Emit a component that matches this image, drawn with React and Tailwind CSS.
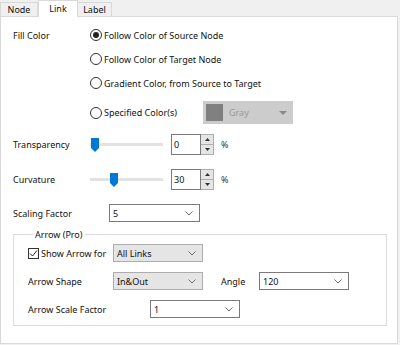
import React from "react";

const font = { fontFamily: '"Noto Sans", "Open Sans", sans-serif' };

// Small helpers for the dialog controls
const Radio = ({ checked, label }) => (
  <div className="flex items-center h-4 whitespace-nowrap">
    <span className="w-[12px] h-[12px] rounded-full border border-[#333] bg-white flex items-center justify-center">
      {checked && <span className="w-[6px] h-[6px] rounded-full bg-[#222]" />}
    </span>
    <span className="ml-[2px]">{label}</span>
  </div>
);

const Chevron = () => (
  <svg width="8" height="5" viewBox="0 0 8 5" className="shrink-0">
    <path d="M0.5 0.5 L4 4 L7.5 0.5" fill="none" stroke="#6d6d6d" strokeWidth="1" />
  </svg>
);

const Select = ({ value, width, gray }) => (
  <div
    className={`flex items-center justify-between h-[18px] pl-[3px] pr-[6px] border ${
      gray ? "bg-[#e5e5e5] border-[#adadad]" : "bg-white border-[#7a7a7a]"
    } ${width}`}
  >
    <span>{value}</span>
    <Chevron />
  </div>
);

const Spin = ({ value }) => (
  <div className="flex items-center">
    <div className="flex h-[21px]">
      <div className="w-[30px] border border-[#7a7a7a] bg-white pl-[2px] flex items-center">
        {value}
      </div>
      <div className="w-[13px] flex flex-col border border-l-0 border-[#adadad]">
        <div className="flex-1 bg-[#e5e5e5] border-b border-[#adadad] flex items-center justify-center">
          <svg width="5" height="3" viewBox="0 0 5 3">
            <path d="M0 3 L2.5 0 L5 3 Z" fill="#333" />
          </svg>
        </div>
        <div className="flex-1 bg-[#e5e5e5] flex items-center justify-center">
          <svg width="5" height="3" viewBox="0 0 5 3">
            <path d="M0 0 L2.5 3 L5 0 Z" fill="#333" />
          </svg>
        </div>
      </div>
    </div>
    <span className="ml-[7px] text-[#333]">%</span>
  </div>
);

const Slider = ({ pos }) => (
  <div className="relative w-[73px] h-[16px] flex items-center">
    <div className="w-full h-[3px] bg-[#e2e2e2]" />
    <svg
      width="8"
      height="14"
      viewBox="0 0 8 14"
      className="absolute top-[1px]"
      style={{ left: pos }}
    >
      <path d="M0 0 H8 V10 L4 14 L0 10 Z" fill="#0078d7" />
    </svg>
  </div>
);

export default function App() {
  return (
    <div
      className="w-[400px] h-[345px] bg-[#f0f0f0] text-[9px] text-[#111] leading-none whitespace-nowrap"
      style={font}
    >
      {/* Tabs */}
      <div className="flex h-[16px] items-end">
        <div className="w-[38px] h-[14px] border border-b-0 border-[#d9d9d9] bg-[#f0f0f0] flex items-center justify-center">
          Node
        </div>
        <div className="w-[40px] h-[17px] -mb-[1px] border border-b-0 border-[#d9d9d9] bg-white flex items-center justify-center relative z-10 pb-[2px]">
          Link
        </div>
        <div className="w-[34px] h-[14px] border border-b-0 border-l-0 border-[#d9d9d9] bg-[#f0f0f0] flex items-center justify-center">
          Label
        </div>
      </div>

      {/* Panel */}
      <div className="w-[398px] h-[328px] border border-[#d9d9d9] bg-white pt-[10px] pl-[12px]">
        {/* Fill color */}
        <div className="flex">
          <div className="w-[77px] h-4 flex items-center">Fill Color</div>
          <div className="flex flex-col">
            <Radio checked label="Follow Color of Source Node" />
            <div className="mt-[8px]">
              <Radio label="Follow Color of Target Node" />
            </div>
            <div className="mt-[8px]">
              <Radio label="Gradient Color, from Source to Target" />
            </div>
            <div className="mt-[10px] flex items-center h-[23px]">
              <div className="w-[113px]">
                <Radio label="Specified Color(s)" />
              </div>
              <div className="w-[90px] h-[23px] bg-[#cccccc] flex items-center pl-[3px] pr-[6px]">
                <span className="w-[17px] h-[17px] bg-[#808080]" />
                <span className="ml-[6px] text-[#9a9a9a] flex-1">Gray</span>
                <svg width="8" height="4" viewBox="0 0 8 4">
                  <path d="M0 0 H8 L4 4 Z" fill="#8a8a8a" />
                </svg>
              </div>
            </div>
          </div>
        </div>

        {/* Transparency */}
        <div className="flex items-center h-[21px] mt-[10px]">
          <div className="w-[77px]">Transparency</div>
          <div className="w-[81px]">
            <Slider pos={1} />
          </div>
          <Spin value="0" />
        </div>

        {/* Curvature */}
        <div className="flex items-center h-[21px] mt-[14px]">
          <div className="w-[77px]">Curvature</div>
          <div className="w-[81px]">
            <Slider pos={20} />
          </div>
          <Spin value="30" />
        </div>

        {/* Scaling factor */}
        <div className="flex items-center h-[18px] mt-[14px]">
          <div className="w-[96px]">Scaling Factor</div>
          <Select value="5" width="w-[91px]" />
        </div>

        {/* Arrow group */}
        <fieldset className="mt-[8px] w-[374px] border border-[#dcdcdc] pl-[14px] pb-[7px]">
          <legend className="ml-[5px] px-[2px]">Arrow (Pro)</legend>
          <div className="flex items-center h-[18px] mt-[5px]">
            <div className="w-[85px] flex items-center">
              <span className="w-[11px] h-[11px] shrink-0 border border-[#333] bg-white flex items-center justify-center">
                <svg width="9" height="9" viewBox="0 0 9 9">
                  <path d="M1 4.5 L3.5 7 L8 1.5" fill="none" stroke="#222" strokeWidth="1" />
                </svg>
              </span>
              <span className="ml-[2px]">Show Arrow for</span>
            </div>
            <Select value="All Links" width="w-[90px]" gray />
          </div>
          <div className="flex items-center h-[18px] mt-[10px]">
            <div className="w-[85px]">Arrow Shape</div>
            <Select value="In&Out" width="w-[90px]" gray />
            <div className="ml-[18px] w-[38px]">Angle</div>
            <Select value="120" width="w-[90px]" />
          </div>
          <div className="flex items-center h-[18px] mt-[10px]">
            <div className="w-[122px]">Arrow Scale Factor</div>
            <Select value="1" width="w-[90px]" />
          </div>
        </fieldset>
      </div>
    </div>
  );
}
